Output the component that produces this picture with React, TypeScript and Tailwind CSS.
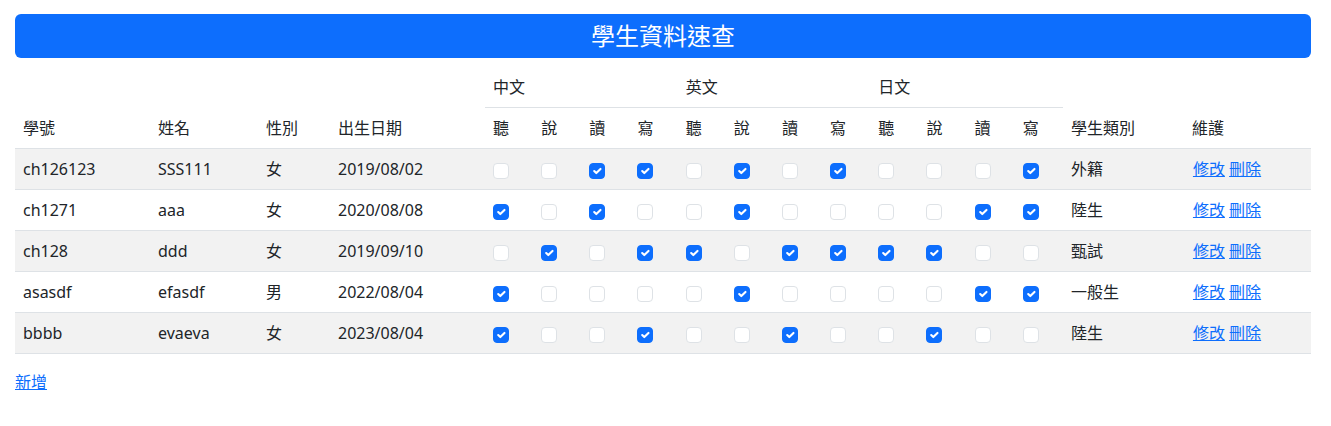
import React from "react";

type Student = {
  id: string;
  name: string;
  gender: string;
  birth: string;
  skills: number[];
  category: string;
};

const students: Student[] = [
  { id: "ch126123", name: "SSS111", gender: "女", birth: "2019/08/02", skills: [0, 0, 1, 1, 0, 1, 0, 1, 0, 0, 0, 1], category: "外籍" },
  { id: "ch1271", name: "aaa", gender: "女", birth: "2020/08/08", skills: [1, 0, 1, 0, 0, 1, 0, 0, 0, 0, 1, 1], category: "陸生" },
  { id: "ch128", name: "ddd", gender: "女", birth: "2019/09/10", skills: [0, 1, 0, 1, 1, 0, 1, 1, 1, 1, 0, 0], category: "甄試" },
  { id: "asasdf", name: "efasdf", gender: "男", birth: "2022/08/04", skills: [1, 0, 0, 0, 0, 1, 0, 0, 0, 0, 1, 1], category: "一般生" },
  { id: "bbbb", name: "evaeva", gender: "女", birth: "2023/08/04", skills: [1, 0, 0, 1, 0, 0, 1, 0, 0, 1, 0, 0], category: "陸生" },
];

const languages = ["中文", "英文", "日文"];
const abilities = ["聽", "說", "讀", "寫"];

function Check({ checked }: { checked: boolean }) {
  return checked ? (
    <span className="inline-flex h-4 w-4 items-center justify-center rounded-[4px] border border-[#0d6efd] bg-[#0d6efd] align-middle">
      <svg viewBox="0 0 20 20" className="h-[14px] w-[14px]" fill="none">
        <path d="m6 10 3 3 6-6" stroke="#fff" strokeWidth={3} strokeLinecap="round" strokeLinejoin="round" />
      </svg>
    </span>
  ) : (
    <span className="inline-block h-4 w-4 rounded-[4px] border border-[#dee2e6] bg-white align-middle" />
  );
}

const cell = "border-b border-[#dee2e6] px-2 py-2 text-left font-normal leading-6";

export default function App() {
  return (
    <div
      className="min-h-[426px] bg-white pl-[15px] pr-[20px] pt-[14px] text-base text-[#212529]"
      style={{ fontFamily: '"Noto Sans", "Noto Sans CJK TC", sans-serif' }}
    >
      <div className="flex h-[44px] items-center justify-center rounded-md bg-[#0d6efd] text-[24px] text-white">
        學生資料速查
      </div>

      <table className="mt-[9px] mb-4 w-full table-fixed border-collapse">
        <colgroup>
          <col className="w-[135px]" />
          <col className="w-[108px]" />
          <col className="w-[72px]" />
          <col className="w-[155px]" />
          {Array.from({ length: 12 }).map((_, i) => (
            <col key={i} className="w-[48.17px]" />
          ))}
          <col className="w-[121px]" />
          <col />
        </colgroup>
        <thead>
          <tr>
            <th rowSpan={2} className={`${cell} align-bottom`}>學號</th>
            <th rowSpan={2} className={`${cell} align-bottom`}>姓名</th>
            <th rowSpan={2} className={`${cell} align-bottom`}>性別</th>
            <th rowSpan={2} className={`${cell} align-bottom`}>出生日期</th>
            {languages.map((lang) => (
              <th key={lang} colSpan={4} className={`${cell} align-bottom`}>
                {lang}
              </th>
            ))}
            <th rowSpan={2} className={`${cell} align-bottom`}>學生類別</th>
            <th rowSpan={2} className={`${cell} align-bottom`}>維護</th>
          </tr>
          <tr>
            {languages.flatMap((lang) =>
              abilities.map((a) => (
                <th key={lang + a} className={`${cell} align-bottom`}>
                  {a}
                </th>
              )),
            )}
          </tr>
        </thead>
        <tbody>
          {students.map((s, idx) => (
            <tr key={s.id} className={idx % 2 === 0 ? "bg-[#f2f2f2]" : "bg-white"}>
              <td className={cell}>{s.id}</td>
              <td className={cell}>{s.name}</td>
              <td className={cell}>{s.gender}</td>
              <td className={cell}>{s.birth}</td>
              {s.skills.map((v, i) => (
                <td key={i} className={cell}>
                  <Check checked={v === 1} />
                </td>
              ))}
              <td className={cell}>{s.category}</td>
              <td className={`${cell} pl-[9px]`}>
                <a href="#" className="text-[#0d6efd] underline">修改</a>{" "}
                <a href="#" className="text-[#0d6efd] underline">刪除</a>
              </td>
            </tr>
          ))}
        </tbody>
      </table>

      <a href="#" className="leading-6 text-[#0d6efd] underline">新增</a>
    </div>
  );
}
